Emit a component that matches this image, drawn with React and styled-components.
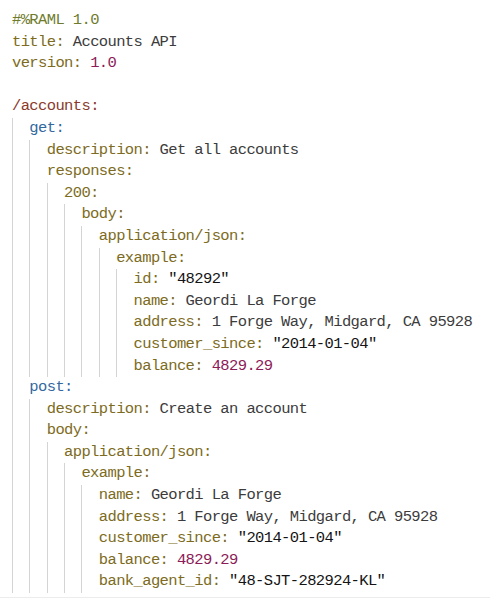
import React from "react";
import styled, { createGlobalStyle } from "styled-components";

const GlobalStyle = createGlobalStyle`
  html, body {
    margin: 0;
    padding: 0;
    background: #fff;
  }
`;

const CHAR = 8.68;
const LINE = 21.6;

const colors = {
  header: "#6f7b2c",
  key: "#7d6b22",
  value: "#3c3c3c",
  str: "#141414",
  num: "#8c1b57",
  path: "#8a3a2c",
  method: "#33689f",
};

const Editor = styled.div`
  padding: 10px 0 0 12px;
  height: 587px;
  border-bottom: 1px solid #ececec;
  width: 478px;
  box-sizing: content-box;
  font-family: "Liberation Mono", "DejaVu Sans Mono", monospace;
  font-size: 15.5px;
  letter-spacing: -0.62px;
  overflow: hidden;
`;

const Line = styled.div`
  display: flex;
  height: ${LINE}px;
  line-height: ${LINE}px;
  white-space: pre;
`;

const Guide = styled.span`
  display: inline-block;
  flex: none;
  width: ${CHAR * 2}px;
  height: 100%;
  box-sizing: border-box;
  border-left: 1px solid #d4d4d4;
`;

const Token = styled.span`
  color: ${(p) => colors[p.$kind] || colors.value};
`;

// [indent, [[kind, text], ...]]
const source = [
  [0, [["header", "#%RAML 1.0"]]],
  [0, [["key", "title: "], ["value", "Accounts API"]]],
  [0, [["key", "version: "], ["num", "1.0"]]],
  [0, []],
  [0, [["path", "/accounts:"]]],
  [1, [["method", "get:"]]],
  [2, [["key", "description: "], ["value", "Get all accounts"]]],
  [2, [["key", "responses:"]]],
  [3, [["key", "200:"]]],
  [4, [["key", "body:"]]],
  [5, [["key", "application/json:"]]],
  [6, [["key", "example:"]]],
  [7, [["key", "id: "], ["str", "\"48292\""]]],
  [7, [["key", "name: "], ["value", "Geordi La Forge"]]],
  [7, [["key", "address: "], ["value", "1 Forge Way, Midgard, CA 95928"]]],
  [7, [["key", "customer_since: "], ["str", "\"2014-01-04\""]]],
  [7, [["key", "balance: "], ["num", "4829.29"]]],
  [1, [["method", "post:"]]],
  [2, [["key", "description: "], ["value", "Create an account"]]],
  [2, [["key", "body:"]]],
  [3, [["key", "application/json:"]]],
  [4, [["key", "example:"]]],
  [5, [["key", "name: "], ["value", "Geordi La Forge"]]],
  [5, [["key", "address: "], ["value", "1 Forge Way, Midgard, CA 95928"]]],
  [5, [["key", "customer_since: "], ["str", "\"2014-01-04\""]]],
  [5, [["key", "balance: "], ["num", "4829.29"]]],
  [5, [["key", "bank_agent_id: "], ["str", "\"48-SJT-282924-KL\""]]],
];

const CodeLine = ({ indent, tokens }) => (
  <Line>
    {Array.from({ length: indent }).map((_, i) => (
      <Guide key={i} />
    ))}
    {tokens.map(([kind, text], i) => (
      <Token key={i} $kind={kind}>
        {text}
      </Token>
    ))}
  </Line>
);

export default function App() {
  return (
    <>
      <GlobalStyle />
      <Editor>
        {source.map(([indent, tokens], i) => (
          <CodeLine key={i} indent={indent} tokens={tokens} />
        ))}
      </Editor>
    </>
  );
}
